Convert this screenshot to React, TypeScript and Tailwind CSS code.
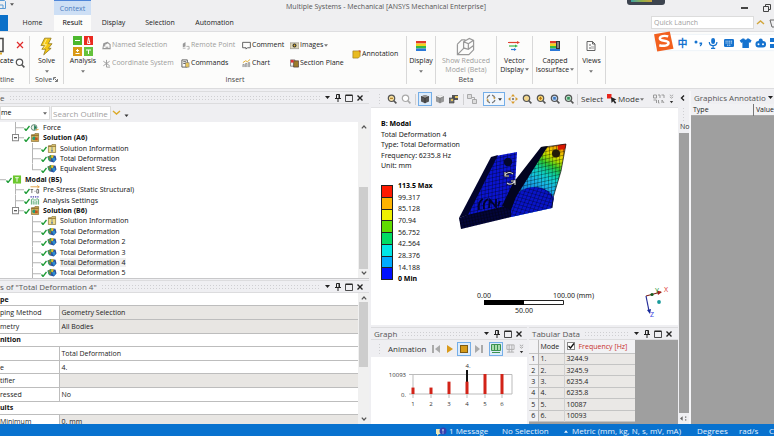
import type { ReactNode } from "react";
import clsx from "clsx";

const tabs = [
  { label: "Home", width: "w-[43px]" },
  { label: "Result", width: "w-[37px]", active: true },
  { label: "Display", width: "w-[45px]" },
  { label: "Selection", width: "w-[48px]" },
  { label: "Automation", width: "w-[61px]" },
];

type Kind = "force" | "solution" | "info" | "result" | "modal" | "stress" | "settings";

const outline: { label: string; level: 0 | 1 | 2; kind: Kind; selected?: boolean; last?: boolean }[] = [
  { label: "Force", level: 1, kind: "force" },
  { label: "Solution (A6)", level: 1, kind: "solution", last: true },
  { label: "Solution Information", level: 2, kind: "info" },
  { label: "Total Deformation", level: 2, kind: "result" },
  { label: "Equivalent Stress", level: 2, kind: "result", last: true },
  { label: "Modal (B5)", level: 0, kind: "modal" },
  { label: "Pre-Stress (Static Structural)", level: 1, kind: "stress" },
  { label: "Analysis Settings", level: 1, kind: "settings" },
  { label: "Solution (B6)", level: 1, kind: "solution", last: true },
  { label: "Solution Information", level: 2, kind: "info" },
  { label: "Total Deformation", level: 2, kind: "result" },
  { label: "Total Deformation 2", level: 2, kind: "result" },
  { label: "Total Deformation 3", level: 2, kind: "result" },
  { label: "Total Deformation 4", level: 2, kind: "result", selected: true },
  { label: "Total Deformation 5", level: 2, kind: "result" },
];

const details: { label: string; value?: string; group?: boolean; shaded?: boolean }[] = [
  { label: "pe", group: true },
  { label: "ping Method", value: "Geometry Selection", shaded: true },
  { label: "metry", value: "All Bodies", shaded: true },
  { label: "nition", group: true },
  { label: "", value: "Total Deformation" },
  { label: "e", value: "4." },
  { label: "tifier", value: "", shaded: true },
  { label: "ressed", value: "No" },
  { label: "ults", group: true },
  { label: "Minimum", value: "0. mm", shaded: true },
];

const legend = [
  { color: "bg-[#ff1a00]", label: "99.317" },
  { color: "bg-[#ffb400]", label: "85.128" },
  { color: "bg-[#eef000]", label: "70.94" },
  { color: "bg-[#5fdc00]", label: "56.752" },
  { color: "bg-[#00dc64]", label: "42.564" },
  { color: "bg-[#00e6e6]", label: "28.376" },
  { color: "bg-[#00aaff]", label: "14.188" },
  { color: "bg-[#0010ff]", label: "0 Min" },
];

const modes = [
  { mode: 1, freq: "3244.9", x: 42 },
  { mode: 2, freq: "3245.9", x: 60 },
  { mode: 3, freq: "6235.4", x: 78 },
  { mode: 4, freq: "6235.8", x: 96 },
  { mode: 5, freq: "10087", x: 114 },
  { mode: 6, freq: "10093", x: 131 },
];

function Caret({ className = "" }: { className?: string }) {
  return (
    <svg viewBox="0 0 5 3" className={clsx("h-[3px] w-[4px] shrink-0", className)} fill="currentColor">
      <path d="M0 0h5L2.500 3z" />
    </svg>
  );
}

function Magnifier({ color = "#fff", stroke = "#555", children }: { color?: string; stroke?: string; children?: ReactNode }) {
  return (
    <svg viewBox="0 0 10 10" className="size-[10px] shrink-0">
      <circle cx="4.500" cy="4.300" r="3.200" fill={color} stroke={stroke} strokeWidth="1.200" />
      <path d="M6.800 6.700 9.400 9.400" stroke={stroke} strokeWidth="1.600" />
      {children}
    </svg>
  );
}

function CubeIcon({ dark }: { dark?: boolean }) {
  return (
    <svg viewBox="0 0 10 10" className="size-[10px] shrink-0">
      <path d="M1 2.500 5 1l4 1.500v5L5 9.300 1 7.500z" fill={dark ? "#555" : "#999"} />
      <path d="M1 2.500 5 1l4 1.500L5 4.200z" fill={dark ? "#999" : "#f2f2f2"} />
      <path d="M5 4.200v5M1 2.500l4 1.700 4-1.700" fill="none" stroke={dark ? "#222" : "#666"} strokeWidth=".6" />
    </svg>
  );
}

function PanelButtons() {
  return (
    <div className="flex shrink-0 items-center gap-[3px] text-[#222]">
      <button aria-label="Panel menu" className="flex size-[7px] items-center justify-center">
        <Caret className="w-[5px]" />
      </button>
      <button aria-label="Pin" className="size-[8px]">
        <svg viewBox="0 0 8 8" className="size-[8px]" stroke="currentColor" fill="none">
          <path d="M2.500.5h3v4h-3zM1 4.500h6M4 4.500V8" />
          <path d="M5 .5v4" />
        </svg>
      </button>
      <button aria-label="Maximize" className="size-[8px]">
        <svg viewBox="0 0 8 8" className="size-[8px]" stroke="currentColor" fill="none">
          <path d="M.5 1.500h7v6h-7z" strokeWidth=".8" />
          <path d="M.5 1.200h7" strokeWidth="1.400" />
        </svg>
      </button>
      <button aria-label="Close panel" className="size-[8px]">
        <svg viewBox="0 0 8 8" className="size-[8px]" stroke="currentColor" strokeWidth="1.400">
          <path d="m1.500 1.500 5 5M6.500 1.500l-5 5" />
        </svg>
      </button>
    </div>
  );
}

function PanelHeader({ title, className = "" }: { title: string; className?: string }) {
  return (
    <div className={clsx("flex h-[13px] shrink-0 items-center gap-[4px] border-y border-[#dcdcde] bg-[#efeff2] text-[#555]", className)}>
      <h2 className="whitespace-nowrap text-[8px]">{title}</h2>
      <div className="h-[5px] flex-1 bg-[radial-gradient(#cfcfd2_1px,transparent_1px)] bg-[length:3px_3px]" />
      <PanelButtons />
    </div>
  );
}

function ScrollBar({ thumb }: { thumb: string }) {
  return (
    <div className="flex w-[11px] shrink-0 flex-col items-center bg-[#f0f0f0] py-[3px]">
      <svg viewBox="0 0 6 4" className="h-[4px] w-[6px] shrink-0" fill="none" stroke="#555" strokeWidth="1.200">
        <path d="M.8 3.400 3 1l2.200 2.400" />
      </svg>
      <div className="flex w-[9px] flex-1 flex-col py-[2px]">
        <div className={clsx("bg-[#cdcdcd]", thumb)} />
      </div>
      <svg viewBox="0 0 6 4" className="h-[4px] w-[6px] shrink-0" fill="none" stroke="#555" strokeWidth="1.200">
        <path d="M.8.6 3 3 5.200.6" />
      </svg>
    </div>
  );
}

/* ---------- Title bar ---------- */

function TitleBar() {
  return (
    <header className="relative flex h-[32px] shrink-0 flex-col justify-end border-b border-[#dedee0] bg-[#efeff1]">
      <div className="absolute inset-x-0 top-0 flex h-[15px] items-center justify-between text-[#555]">
        <div className="flex w-[98px] items-center gap-[4px] pb-[6px]">
          <svg viewBox="0 0 6 9" className="h-[9px] w-[6px]" fill="none" stroke="#5b9bd5">
            <path d="M0 .5h4.500l1 1v7H0M0 5h3v3.500" />
          </svg>
          <Caret />
        </div>
        <h1 className="whitespace-nowrap text-[7px]">Multiple Systems - Mechanical [ANSYS Mechanical Enterprise]</h1>
        <div className="flex w-[100px] justify-end gap-[15px] pr-[3px]">
          <button aria-label="Minimize" className="h-[5px] w-[7px] border-b-2 border-[#444]" />
          <button aria-label="Restore" className="size-[8px]">
            <svg viewBox="0 0 8 8" className="size-[8px]" fill="none" stroke="#444">
              <path d="M.5 2.500h5v5h-5zM2.500 2.500v-2h5v5h-2" />
            </svg>
          </button>
        </div>
      </div>
      <div className="absolute top-0 right-[109px] h-[5px] w-[38px] rounded-b-[3px] bg-[#3d444f] px-[4px]">
        <div className="h-[2px] w-[21px] bg-linear-to-r from-[#3aa0a0] via-[#8dae4a] to-[#c9a43c]" />
      </div>
      <nav className="flex items-end text-[#222]">
        <button aria-label="File" className="h-[16px] w-[8px] bg-[#0b70c9]" />
        <div className="w-[3px]" />
        {tabs.map((tab) => (
          <div key={tab.label} className={clsx("flex flex-col text-center", tab.width)}>
            {tab.active && (
              <span className="h-[15px] border-t border-[#4f86d8] bg-[#cddff5] pt-[1px] text-[7px] leading-[13px] text-[#4a7cc0]">Context</span>
            )}
            <button className={clsx("h-[16px] text-[7px]", tab.active && "bg-[#fcfcfb] text-black")}>{tab.label}</button>
          </div>
        ))}
        <div className="flex-1" />
        <input aria-label="Quick Launch" placeholder="Quick Launch" className="mb-[2px] h-[13px] w-[103px] border border-[#dcdcdc] bg-white px-[2px] text-[7px] placeholder:text-[#a0a0a0]" />
        <svg viewBox="0 0 20 12" className="mb-[2px] h-[12px] w-[20px]" fill="none">
          <path d="m3 7 3.500-3L10 7" stroke="#d2a63c" strokeWidth="1.400" />
          <path d="m16 3 2 7h2M16 3h4" stroke="#666" />
        </svg>
      </nav>
    </header>
  );
}

/* ---------- Ribbon ---------- */

function Group({ label, className, children }: { label?: ReactNode; className: string; children: ReactNode }) {
  return (
    <section className={clsx("my-[4px] flex shrink-0 flex-col border-r border-[#d8d8d8]", className)}>
      <div className="flex flex-1 justify-center">{children}</div>
      <div className="h-[9px] text-center text-[7px] leading-[9px] text-[#444]">{label}</div>
    </section>
  );
}

function BigButton({ icon, lines, caret, disabled }: { icon: ReactNode; lines: string[]; caret?: "below" | "inline"; disabled?: boolean }) {
  return (
    <button disabled={disabled} className={clsx("flex flex-col items-center text-[7px] leading-[9px] whitespace-nowrap", disabled ? "text-[#9c9c9c]" : "text-[#222]")}>
      <span className="flex h-[20px] items-center justify-center">{icon}</span>
      {lines.map((line, i) => (
        <span key={line} className="flex items-center gap-[1px]">
          {line}
          {caret === "inline" && i === lines.length - 1 && <Caret className="text-[#777]" />}
        </span>
      ))}
      {caret === "below" && <Caret className="mt-[5px] text-[#777]" />}
    </button>
  );
}

function SmallButton({ icon, label, disabled, caret }: { icon: ReactNode; label: string; disabled?: boolean; caret?: boolean }) {
  return (
    <button disabled={disabled} className={clsx("flex h-[18px] items-center gap-[1px] text-[7px] whitespace-nowrap", disabled ? "text-[#9c9c9c]" : "text-[#222]")}>
      <svg viewBox="0 0 10 10" className="size-[9px] shrink-0" fill="none">
        {icon}
      </svg>
      {label}
      {caret && <Caret className="text-[#777]" />}
    </button>
  );
}

function Ribbon() {
  return (
    <div className="relative flex h-[57px] shrink-0 border-b border-[#dcdcde] bg-[#fcfcfb]">
      <Group className="w-[30px]" label={<span className="block pr-[15px]">tline</span>}>
        <div className="flex w-full">
          <button className="flex w-[13px] flex-col items-start text-[7px] leading-[9px]">
            <svg viewBox="0 0 6 20" className="h-[20px] w-[6px]" fill="none">
              <path d="M0 2.500h3v13H0" stroke="#444" strokeWidth="1.500" />
              <path d="M0 17.500h2" stroke="#e2ad28" strokeWidth="2" />
            </svg>
            cate
          </button>
          <div className="flex w-[13px] flex-col items-center">
            <button aria-label="Delete" className="h-[18px]">
              <svg viewBox="0 0 8 8" className="size-[8px]" stroke="#e02a2a" strokeWidth="1.200">
                <path d="m1 1 6 6M7 1 1 7" />
              </svg>
            </button>
            <button aria-label="Find" className="h-[18px]">
              <Magnifier />
            </button>
          </div>
        </div>
      </Group>
      <Group
        className="w-[34px]"
        label={
          <span className="flex items-center justify-center gap-[1px]">
            Solve
            <svg viewBox="0 0 5 5" className="size-[5px]" fill="none" stroke="#777">
              <path d="M.5 3V.5H3M1.500 1.500l3 3M4.500 2v2.500H2" />
            </svg>
          </span>
        }
      >
        <BigButton
          lines={["Solve"]}
          caret="below"
          icon={
            <svg viewBox="0 0 14 20" className="h-[19px] w-[13px]">
              <path d="M5 1h7L9 7h4l-4 5h3l-8 7 2-6H2l3-4H1z" fill="#f3c613" stroke="#8b7318" strokeWidth=".8" />
              <path d="m7 2-3 6h3l-3 4" stroke="#fff09a" fill="none" />
            </svg>
          }
        />
      </Group>
      <Group className="w-[343px]" label="Insert">
        <div className="flex w-[38px] shrink-0 justify-center">
          <BigButton
            lines={["Analysis"]}
            caret="below"
            icon={
              <svg viewBox="0 0 20 20" className="size-[20px]">
                <path d="M0 0h9v9H0z" fill="#4db82e" />
                <path d="M11 0h9v9h-9z" fill="#ea2a20" />
                <path d="M0 11h9v9H0z" fill="#d99a17" />
                <path d="M11 11h9v9h-9z" fill="#64c23c" />
                <path d="M2 4.500h5M3 14.500h3M4.500 13v3M2.500 17.500h4M13 14h5M15.500 14v4M14.500 7.500 15.500 1.500l1.500 6z" stroke="#fff" fill="none" />
              </svg>
            }
          />
        </div>
        <div className="grid flex-1 grid-cols-[79px_61px_48px_62px_1fr] content-start">
          <SmallButton disabled label="Named Selection" icon={<path d="M1 8.500h8V4L6 1.500 2 3zM3 6V3.500l3-1M4 7h3" stroke="#999" strokeWidth="1.200" />} />
          <SmallButton disabled label="Remote Point" icon={<><path d="M2 7V3l3-2v5z" fill="#999" /><path d="M6 6h3v3H7M2 8h3" stroke="#aaa" /></>} />
          <SmallButton label="Comment" icon={<path d="M.7 1.500h8.600v6H6L4.500 9V7.500H.7z" stroke="#555" />} />
          <SmallButton caret label="Images" icon={<><path d="M0 2h10v6.500H0z" fill="#ddd5b6" stroke="#777" strokeWidth=".6" /><circle cx="5" cy="5" r="2.200" fill="#333" /><circle cx="5" cy="5" r="1" fill="#e7b823" /></>} />
          <div className="row-span-2 flex items-center">
            <SmallButton label="Annotation" icon={<><path d="M1 1h8v6L7 9H1z" fill="#e9bb20" stroke="#96771c" strokeWidth=".7" /><path d="M7 .5h2.500V3z" fill="#d43" /></>} />
          </div>
          <SmallButton disabled label="Coordinate System" icon={<path d="M5 1v8M1.500 2.500 8.500 7.500M8.500 2.500 1.500 7.500M5 9h4" stroke="#999" />} />
          <SmallButton label="Commands" icon={<><path d="M1 1h6v8H1zM2.500 3h3M2.500 5h3" stroke="#555" /><path d="M5 4h4v5H5z" fill="#e9c75c" stroke="#777" strokeWidth=".6" /></>} />
          <SmallButton label="Chart" icon={<><path d="M1 9V6h1.500v3M4 9V5h1.500v4M7 9V4h1.500v5" fill="#ddd" stroke="#777" strokeWidth=".7" /><path d="m1 4 3-2 2 1 3-2.500" stroke="#e3a81d" /></>} />
          <SmallButton label="Section Plane" icon={<><path d="M.5 1h5v7h-5z" fill="#eee" stroke="#555" strokeWidth=".7" /><path d="M4 2h5.500v7H4z" fill="#9c7b2a" stroke="#433" strokeWidth=".7" /><path d="M1 1h3v3H1z" fill="#d33" /></>} />
        </div>
      </Group>
      <Group className="w-[29px]">
        <BigButton
          lines={["Display"]}
          caret="below"
          icon={
            <svg viewBox="0 0 10 10" className="size-[10px]">
              <path d="M0 0h10v2.500H0z" fill="#e03a2a" />
              <path d="M0 2.500h10V5H0z" fill="#f3d21c" />
              <path d="M0 5h10v2.500H0z" fill="#34b944" />
              <path d="M0 7.500h10V10H0z" fill="#2a78d8" />
            </svg>
          }
        />
      </Group>
      <Group className="w-[61px]" label="Beta">
        <BigButton
          disabled
          lines={["Show Reduced", "Model (Beta)"]}
          icon={
            <svg viewBox="0 0 20 20" className="size-[19px]" fill="none" stroke="#999" strokeWidth="1.300">
              <path d="M1.500 7.500v11h12l5-5v-10L14 1.500 8 5v6.500l5 1.500 5.500-4M1.500 7.500 6 3h4M8 5l5 2v6M13 7l5.500-3.500M1.500 18.500 8 12" />
            </svg>
          }
        />
      </Group>
      <Group className="w-[36px]">
        <BigButton
          lines={["Vector", "Display"]}
          caret="inline"
          icon={
            <svg viewBox="0 0 12 10" className="h-[10px] w-[12px]" strokeWidth="1.200">
              <path d="M0 1.500h9" stroke="#e04030" />
              <path d="M9 0l3 1.500L9 3z" fill="#e04030" />
              <path d="M1 5h6" stroke="#3cb44b" />
              <path d="M7 3.500 10 5 7 6.500z" fill="#3cb44b" />
              <path d="M3 8.500h3" stroke="#2a78d8" />
              <path d="M6 7l2.500 1.500L6 10z" fill="#2a78d8" />
            </svg>
          }
        />
      </Group>
      <Group className="w-[45px]">
        <BigButton
          lines={["Capped", "Isosurface"]}
          caret="inline"
          icon={
            <svg viewBox="0 0 10 10" className="size-[10px]">
              <path d="M0 0h6v2.500H0z" fill="#e03a2a" />
              <path d="M0 2.500h6V5H0z" fill="#f3d21c" />
              <path d="M0 5h6v2.500H0z" fill="#34b944" />
              <path d="M0 7.500h10V10H0z" fill="#2a78d8" />
              <path d="M6 0h4v8H6z" fill="#333" />
              <path d="M7 2h2M7 4h2M7 6h2" stroke="#fff" strokeWidth=".8" />
            </svg>
          }
        />
      </Group>
      <Group className="w-[28px]">
        <BigButton
          lines={["Views"]}
          caret="below"
          icon={
            <svg viewBox="0 0 10 10" className="size-[10px]" fill="none" stroke="#555" strokeWidth=".9">
              <path d="M1 .5h5.500L9 3v6.500H1zM6.500.5V3H9M3 4h2M3 7h4" />
              <path d="M5 5h3v3H5z" fill="#ccc" stroke="none" />
            </svg>
          }
        />
      </Group>
      <ImeBar />
    </div>
  );
}

/* floating input method bar */
function ImeBar() {
  return (
    <div className="absolute top-[3px] right-0 flex h-[15px] w-[119px] items-center rounded-l-[3px] bg-white pl-[20px] text-[#1673cf] shadow-[0_0_2px_#cfe0f2]">
      <svg viewBox="0 0 20 20" className="absolute -top-[4px] -left-[2px] size-[21px]">
        <path d="m1 3 15-2.500L19.500 17 4 19.500z" fill="#f2601f" />
        <path d="M14.500 5.200C11 4 6.500 4.800 6.500 7.200c0 3 8 1.200 8.300 4.100.2 2.700-5 3.400-8.800 2.300" fill="none" stroke="#fff" strokeWidth="2.300" />
      </svg>
      <button className="w-[16px] text-center font-['Noto_Sans_CJK_SC',sans-serif] text-[10px] leading-[14px] font-bold">中</button>
      <svg viewBox="0 0 78 12" className="h-[12px] w-[78px] shrink-0" fill="currentColor">
        <circle cx="6" cy="5" r="1.500" />
        <path d="M9.500 5.500h2.600c.5 2-.6 3.500-2.200 4V8.300c.6-.2.900-.6.900-1H9.500z" />
        <rect x="21.200" y="1" width="3.800" height="6" rx="1.900" />
        <path d="M19.300 5c0 4.800 7.600 4.800 7.600 0M23.100 9v2.500M21 11.300h4.200" fill="none" stroke="currentColor" strokeWidth="1.200" />
        <rect x="34" y="2" width="10" height="8" rx="1.300" />
        <path d="M35.500 4.200h7M35.500 6h7M37 8.200h4" stroke="#fff" strokeWidth=".8" strokeDasharray="1.200 .6" />
        <path d="m52.500 1.500-2.800 2 1.500 2.500 1.200-.7V11h6.500V5.300l1.200.7 1.500-2.500-2.800-2h-1.700c-.6 1.600-2.300 1.600-2.900 0z" />
        <rect x="65.500" y="4" width="10.500" height="6.500" rx="3" />
        <circle cx="70.700" cy="3.500" r="2" />
        <circle cx="68.500" cy="7.200" r="1" fill="#fff" />
        <circle cx="73" cy="7.200" r="1" fill="#fff" />
      </svg>
      <svg viewBox="0 0 4 10" className="ml-[2px] h-[10px] w-[4px] shrink-0" fill="currentColor">
        <path d="M0 0h4v4H0zM0 6h4v4H0z" />
      </svg>
    </div>
  );
}

/* ---------- Outline ---------- */

function TreeIcon({ kind }: { kind: Kind }) {
  return (
    <svg viewBox="0 0 10 10" className="h-[9px] w-[10px] shrink-0">
      {kind === "force" && (
        <>
          <circle cx="4" cy="5" r="3.200" fill="#e8efe8" stroke="#3d6b54" strokeWidth=".8" />
          <path d="M4 2 7 5 4 8z" fill="#1f7a4f" />
          <path d="m6 8 3-1" stroke="#e4a02a" />
        </>
      )}
      {(kind === "solution" || kind === "info") && (
        <>
          <path d="M1 2h3l1-1.500h4V9.500H1z" fill={kind === "info" ? "#f0dc86" : "#d3ac56"} stroke="#7d6527" strokeWidth=".7" />
          <path d="M1 2.500h8" stroke="#7a5c20" />
        </>
      )}
      {kind === "solution" && (
        <>
          <circle cx="4" cy="6" r="2" fill="#269a74" />
          <path d="M5 5h3v3H5z" fill="#c0531f" />
        </>
      )}
      {kind === "info" && <path d="M5 4v1M5 6v2.500" stroke="#2c5ca8" strokeWidth="1.300" />}
      {kind === "result" && (
        <>
          <path d="M0 3 4 1l5 1 1 4-3 3.500L2 8z" fill="#2a4f9c" />
          <path d="M0 3 4 1l1 3-2 4-2-1z" fill="#2fa060" />
          <path d="m4 1 3 .5L6 5 4 4z" fill="#e0c22f" />
          <path d="m5 5 3-1 1 3-2 2z" fill="#2b8fd0" />
          <path d="m1 3 2 1v3" stroke="#c7602a" fill="none" />
        </>
      )}
      {kind === "modal" && (
        <>
          <path d="M.5.5h9v9h-9z" fill="#6cc72e" />
          <path d="M3 3h4M5 3v4.500" stroke="#fff" />
        </>
      )}
      {kind === "stress" && (
        <>
          <path d="M0 2h10M7.500.5 9.500 2 7.500 3.500" stroke="#e09a3c" fill="none" />
          <path d="M0 5h3M1.500 5v4M4.500 7h1M7 5h2v4H7z" stroke="#555" fill="none" strokeWidth=".9" />
        </>
      )}
      {kind === "settings" && (
        <>
          <path d="M0 1h10" stroke="#4a3fb0" strokeDasharray="1.500 1" strokeWidth="1.500" />
          <path d="M1 9.500V4l2-1 2 2 2-2 2 1v5.500M3 9.500V5M5 9.500V6M7 9.500V5" stroke="#3b9a5a" fill="none" strokeWidth=".9" />
        </>
      )}
    </svg>
  );
}

function TreeRow({ item }: { item: (typeof outline)[number] }) {
  const branch = item.kind === "solution";
  return (
    <li className="flex min-h-0 flex-1 items-center whitespace-nowrap">
      <svg
        viewBox={`0 0 ${[6, 24, 41][item.level]} 10`}
        preserveAspectRatio="none"
        className={clsx("h-full shrink-0", item.level === 0 && "w-[6px]", item.level === 1 && "w-[24px]", item.level === 2 && "w-[41px]")}
        fill="none"
        stroke="#b4b4b4"
      >
        {item.level === 0 && <path d="M0 5.500h6" />}
        {item.level === 1 && <path d={item.last ? "M15.500 0v5.500H24" : "M15.500 0v10M15.500 5.500H24"} />}
        {item.level === 2 && <path d={item.last ? "M32.500 0v5.500H41" : "M32.500 0v10M32.500 5.500H41"} />}
        {branch && (
          <>
            <path d="M12.500 2.500h6v6h-6z" fill="#fff" stroke="#888" />
            <path d="M14 5.500h3" stroke="#333" />
          </>
        )}
      </svg>
      <svg viewBox="0 0 6 8" className="h-[8px] w-[6px] shrink-0" fill="none" stroke="#1c9a35" strokeWidth="1.300">
        <path d="m.5 5.500 1.500 2L5.500 3" />
      </svg>
      <TreeIcon kind={item.kind} />
      <button
        className={clsx(
          "ml-[3px] text-[7px] leading-[9px]",
          item.kind === "solution" || item.kind === "modal" ? "font-bold text-[#111]" : "text-[#222]",
          item.selected && "bg-[#efefef]",
        )}
      >
        {item.label}
      </button>
    </li>
  );
}

function OutlinePanel() {
  return (
    <section className="flex h-[188px] shrink-0 flex-col border-b border-[#c8c8ca] bg-[#efeff2]">
      <PanelHeader title="e" className="pr-[5px]" />
      <div className="flex h-[18px] shrink-0 items-center gap-[1px] py-[2px]">
        <label className="relative flex h-full w-[50px] items-center">
          <select aria-label="Filter by" className="size-full appearance-none border border-[#dcdcdc] bg-white text-[7px]">
            <option>me</option>
          </select>
          <Caret className="absolute right-[3px] text-[#666]" />
        </label>
        <input aria-label="Search Outline" placeholder="Search Outline" className="h-full w-[60px] border border-[#dcdcdc] bg-white pl-[1px] text-[8px] placeholder:text-[#a0a0a0]" />
        <svg viewBox="0 0 20 10" className="h-[10px] w-[20px]" fill="none">
          <path d="m1 3 3.500 3L8 3" stroke="#dba928" strokeWidth="1.400" />
          <path d="M12.500 6.500h4l-2 2.500z" fill="#333" />
        </svg>
      </div>
      <div className="flex min-h-0 flex-1 bg-white">
        <ul className="flex flex-1 flex-col font-['Noto_Sans','Open_Sans',sans-serif]">
          {outline.map((item, i) => (
            <TreeRow key={i} item={item} />
          ))}
        </ul>
        <ScrollBar thumb="mt-auto h-[82px]" />
      </div>
    </section>
  );
}

function DetailsPanel() {
  return (
    <section className="flex min-h-0 flex-1 flex-col overflow-hidden bg-[#efeff2] pt-[1px]">
      <PanelHeader title={'s of "Total Deformation 4"'} className="pr-[5px]" />
      <div className="flex min-h-0 flex-1 overflow-hidden">
        <div className="flex-1 overflow-hidden bg-white">
          <table className="h-[136px] w-full border-collapse text-[7px] leading-[9px] text-[#222]">
            <tbody>
              {details.map((row, i) => (
                <tr key={i} className="border-b border-[#bdbdbd]">
                  <th scope="row" colSpan={row.group ? 2 : 1} className={clsx("p-0 text-left", row.group ? "font-bold text-[#111]" : "w-[59px] border-r border-[#bdbdbd] font-normal")}>
                    {row.label}
                  </th>
                  {!row.group && <td className={clsx("p-0 pl-[2px]", row.shaded && "bg-[#e8e6e3]")}>{row.value}</td>}
                </tr>
              ))}
            </tbody>
          </table>
        </div>
        <ScrollBar thumb="h-[65px]" />
      </div>
    </section>
  );
}

/* ---------- Graphics ---------- */

function GraphicsToolbar() {
  return (
    <div className="flex h-[17px] shrink-0 items-center overflow-hidden border-b border-[#e2e2e4] bg-[#efeff2] pl-[7px] text-[8px] text-[#333]">
      <div className="h-[12px] w-[4px] shrink-0 bg-[radial-gradient(#cfcfd2_1px,transparent_1px)] bg-[length:3px_3px]" />
      <button aria-label="Zoom fit" className="ml-[5px]"><Magnifier color="#f6dfa0"><path d="M3 4.300h3" stroke="#a06d10" /></Magnifier></button>
      <button aria-label="Zoom previous" className="ml-[4px]"><Magnifier stroke="#aaa" /></button>
      <div className="ml-[4px] h-[11px] w-px shrink-0 bg-[#d0d0d2]" />
      <button aria-label="Shaded with edges" className="ml-[2px] flex size-[14px] shrink-0 items-center justify-center border border-[#74aee8] bg-[#dcebfa]"><CubeIcon dark /></button>
      <button aria-label="Wireframe" className="ml-[3px]"><CubeIcon /></button>
      <button aria-label="Show mesh" className="ml-[4px]">
        <svg viewBox="0 0 10 10" className="size-[10px]">
          <path d="M3 1h6v5H3z" fill="#555" />
          <path d="M0 4h5v5H0z" fill="#777" stroke="#333" strokeWidth=".6" />
          <path d="M6 2h3v2H6zM2 5h2v2H2z" fill="#e4c35e" />
        </svg>
      </button>
      <div className="ml-[4px] h-[11px] w-px shrink-0 bg-[#d0d0d2]" />
      <button aria-label="Copy view" className="ml-[3px]">
        <svg viewBox="0 0 10 10" className="size-[10px]" fill="#ddd" stroke="#999" strokeWidth=".8">
          <path d="M.5.5h4v4h-4zM5.500 5.500h4v4h-4z" />
          <path d="M5 3.500h2.500v2" fill="none" />
        </svg>
      </button>
      <button aria-label="Rotate" className="ml-[6px] flex h-[14px] w-[22px] shrink-0 items-center justify-center gap-[2px] border border-[#74aee8] bg-[#f1f6fc]">
        <svg viewBox="0 0 10 10" className="size-[10px]" fill="none" stroke="#777" strokeWidth="1.200">
          <path d="M1 4.500A4 4 0 0 1 4 1.200M6 1.200a4 4 0 0 1 3 3M9 6a4 4 0 0 1-3 2.800M4 8.800A4 4 0 0 1 1.100 6" />
          <path d="M7.500 3.500 9 4.800M1 5.200 2.500 6.500" stroke="#d5a33a" />
        </svg>
        <Caret />
      </button>
      <button aria-label="Pan" className="ml-[3px]">
        <svg viewBox="0 0 10 10" className="size-[10px]" fill="#d99b28">
          <path d="m5 0 2 2.500H3zM5 10 3 7.500h4zM0 5l2.500-2v4zM10 5 7.500 7V3z" />
          <path d="M4 4h2v2H4z" fill="#888" />
        </svg>
      </button>
      <button aria-label="Zoom" className="ml-[4px]"><Magnifier color="#f1d58b" /></button>
      <button aria-label="Zoom in" className="ml-[4px]"><Magnifier color="#f7d777"><path d="M3 4.300h3M4.500 2.800v3" stroke="#b3720a" /></Magnifier></button>
      <button aria-label="Box zoom" className="ml-[4px]"><Magnifier color="#bcd3f0"><path d="M3.200 3h2.600v2.600H3.200z" fill="#3f78c0" /></Magnifier></button>
      <button aria-label="Fit view" className="ml-[4px]"><Magnifier color="#b9dfc6"><path d="M3.200 3h2.600v2.600H3.200z" fill="#31905a" /></Magnifier></button>
      <div className="ml-[3px] h-[11px] w-px shrink-0 bg-[#d0d0d2]" />
      <span className="ml-[3px]">Select</span>
      <button className="ml-[4px] flex items-center gap-[1px]">
        <svg viewBox="0 0 10 10" className="size-[10px]">
          <path d="M0 0h4.500v4.500H0z" fill="#e8261c" />
          <path d="m4 3 5.500 2.500-2.200.8 2 2.500-1.300 1-1.800-2.600L4.500 9z" fill="#222" />
        </svg>
        Mode
        <Caret className="text-[#777]" />
      </button>
      <button aria-label="Selection filters" className="ml-auto">
        <svg viewBox="0 0 12 10" className="h-[10px] w-[12px]" fill="none" stroke="#999">
          <path d="M.5 1h3v3h-3zM5 1h2v3M8.500 1H11v3M.5 6h3v3M5.500 6v3h1M9 6l2 3M9 9V6" />
        </svg>
      </button>
      <button aria-label="More tools" className="mr-[4px] ml-[4px]">
        <svg viewBox="0 0 6 10" className="h-[10px] w-[5px]" fill="none" stroke="#999">
          <path d="m1 0 2 1.500L5 0M1 2.500 3 4l2-1.500" />
          <path d="M1 7.500h4L3 10z" fill="#333" stroke="none" />
        </svg>
      </button>
    </div>
  );
}

/* two-fin part with mesh and deformation bands */
function Model() {
  return (
    <svg viewBox="0 0 112 90" className="mt-[33px] h-[90px] w-[112px] shrink-0">
      <defs>
        <pattern id="mesh" width="3.600" height="3.600" patternUnits="userSpaceOnUse" patternTransform="rotate(-12) skewX(-14)">
          <path d="M0 0h3.600M0 0v3.600" stroke="#000" strokeWidth=".9" strokeOpacity=".7" />
        </pattern>
        <pattern id="mesh-curved" width="3.800" height="3.600" patternUnits="userSpaceOnUse" patternTransform="rotate(16) skewX(-6)">
          <path d="M0 0h3.800M0 0v3.600" stroke="#000" strokeWidth=".9" strokeOpacity=".65" />
        </pattern>
        <pattern id="mesh-dark" width="3" height="3" patternUnits="userSpaceOnUse" patternTransform="rotate(-12)">
          <path d="M0 0h3M0 0v3" stroke="#000" strokeWidth="1.200" strokeOpacity=".6" />
        </pattern>
        <linearGradient id="bands" gradientUnits="userSpaceOnUse" x1="112" y1="4" x2="85" y2="58">
          <stop offset="0" stopColor="#e01400" />
          <stop offset=".07" stopColor="#e84000" />
          <stop offset=".12" stopColor="#f0a800" />
          <stop offset=".24" stopColor="#e8dc00" />
          <stop offset=".32" stopColor="#a8dc00" />
          <stop offset=".42" stopColor="#30c830" />
          <stop offset=".52" stopColor="#10cc90" />
          <stop offset=".62" stopColor="#10d0d0" />
          <stop offset=".76" stopColor="#18b4e8" />
          <stop offset="1" stopColor="#1080e0" />
        </linearGradient>
      </defs>
      <path d="m41 15 21-4-2 33-12 22-37 9z" fill="#0a14d0" />
      <path d="m41 15 21-4-2 33-12 22-37 9z" fill="url(#mesh)" />
      <path d="m36 16 7-2-30 60-9 3z" fill="#02042c" />
      <path d="m4 77 8-3 38-9 6 1v10L6 88z" fill="#03053a" />
      <path d="m4 77 8-3 38-9 6 1v10L6 88z" fill="url(#mesh-dark)" />
      <path d="m91 6 20-3-5 27-8 27-1 10-41 9V66l4-9z" fill="url(#bands)" />
      <path d="M60 54c6-5 12-8 19-8 10 0 16 4 20 11l-2 10-41 9V66z" fill="#0814c8" />
      <path d="m91 6 20-3-5 27-8 27-1 1C93 50 87 46 79 46c-7 0-13 3-19 8z" fill="url(#mesh)" />
      <path d="M60 54c6-5 12-8 19-8 10 0 16 4 20 11l-2 10-41 9V66z" fill="url(#mesh-curved)" />
      <path d="m86 6 7-1-32 51-5 13-9-4 11-23z" fill="#020420" />
      <path d="m103 4 8-1-1 5-7 1z" fill="#d81800" />
      <path d="m86 6.500 25-3.500-5 27-8 27-1 10" fill="none" stroke="#111" strokeWidth=".7" />
      <circle cx="53" cy="21" r="4.200" fill="#04072f" />
      <circle cx="101" cy="12.500" r="4" fill="#241c08" />
      <path d="M24 69c-1-6 0-9 4-11M29 68c-1-5 0-8 4-10M34 67l1-8 6 7v-8M43 65l2-5" fill="none" stroke="#02042c" strokeWidth="1.800" />
      <path d="M50 34a5 5 0 0 1 8-1M60 39a5 5 0 0 1-8 3M50 31v4h4M60 44v-4h-4" fill="none" stroke="#111" strokeWidth="2.400" />
      <path d="M50 34a5 5 0 0 1 8-1M60 39a5 5 0 0 1-8 3M50 31v4h4M60 44v-4h-4" fill="none" stroke="#d8d8e4" strokeWidth="1.100" />
    </svg>
  );
}

function Viewport() {
  return (
    <div className="flex h-[217px] shrink-0 overflow-hidden bg-white font-['Noto_Sans','Open_Sans',sans-serif] text-[7px] text-[#222]">
      <div className="w-[84px] shrink-0 pt-[11px] pl-[10px] whitespace-nowrap">
        <h3 className="leading-[10px] font-bold text-black">B: Modal</h3>
        <p className="leading-[11px]">Total Deformation 4</p>
        <p className="leading-[10px]">Type: Total Deformation</p>
        <p className="leading-[11px]">Frequency: 6235.8 Hz</p>
        <p className="leading-[10px]">Unit: mm</p>
        <div className="mt-[9px] flex h-[105px] gap-[5px]">
          <div className="mt-[5px] mb-[5px] flex w-[12px] flex-col border-x border-t border-[#222]">
            {legend.map((band) => (
              <div key={band.label} className={clsx("flex-1 border-b border-[#222]", band.color)} />
            ))}
          </div>
          <ul className="flex flex-col leading-[11px]">
            <li className="flex-1 font-bold text-black">113.5 Max</li>
            {legend.map((band) => (
              <li key={band.label} className={clsx("flex-1", band.label === "0 Min" && "font-bold text-black")}>{band.label}</li>
            ))}
          </ul>
        </div>
      </div>
      <div className="flex flex-1 flex-col justify-between">
        <Model />
        <svg viewBox="0 0 130 30" className="mb-[6px] ml-[16px] h-[30px] w-[130px]" fill="#222" fontSize="7">
          <text x="6" y="9">0.00</text>
          <text x="82" y="9">100.00 (mm)</text>
          <path d="M13.500 11.500h79v4h-79z" fill="#fff" stroke="#222" />
          <path d="M13 11h40v5H13z" fill="#000" />
          <text x="44" y="24">50.00</text>
        </svg>
      </div>
      <svg viewBox="0 -4 30 38" className="mr-[5px] mb-[4px] h-[38px] w-[30px] shrink-0 self-end" fill="none" fontSize="7">
        <path d="M3 9 18 5" stroke="#7a2018" strokeWidth="1.200" />
        <path d="m3 9 3 15" stroke="#28309a" strokeWidth="1.200" />
        <circle cx="9" cy="7.500" r="1.600" fill="#135c1c" />
        <path d="m14 3.500 5 1.500-4 3z" fill="#a02018" />
        <path d="m4 23 4-1-1 5z" fill="#182a9a" />
        <circle cx="16" cy="15" r="1.900" fill="#189a9a" />
        <text x="12" y="6" fill="#2a9a3a">Y</text>
        <text x="21" y="5" fill="#e04038">X</text>
        <text x="7" y="30" fill="#3a48e0">Z</text>
      </svg>
    </div>
  );
}

function GraphPanel() {
  return (
    <section className="flex w-[156px] shrink-0 flex-col bg-white">
      <PanelHeader title="Graph" className="pr-[4px] pl-[3px]" />
      <div className="flex h-[17px] shrink-0 items-center bg-[#efeff2] pl-[7px] text-[8px] text-[#333]">
        <div className="h-[12px] w-[4px] bg-[radial-gradient(#cfcfd2_1px,transparent_1px)] bg-[length:3px_3px]" />
        <span className="ml-[6px] w-[38px]">Animation</span>
        <button aria-label="First frame" className="ml-[5px]">
          <svg viewBox="0 0 10 10" className="size-[10px]" fill="#aaa"><path d="M1 1h2v8H1zM9 1v8L4 5z" /></svg>
        </button>
        <button aria-label="Play" className="ml-[4px]">
          <svg viewBox="0 0 10 10" className="size-[10px]"><path d="m2 1 6 4-6 4z" fill="#d99a1c" /></svg>
        </button>
        <button aria-label="Stop" className="ml-[2px] flex size-[14px] items-center justify-center border border-[#74aee8] bg-[#dcebfa]">
          <span className="size-[8px] border border-[#7c5a14] bg-[#d59a18]" />
        </button>
        <button aria-label="Last frame" className="ml-[3px]">
          <svg viewBox="0 0 10 10" className="size-[10px]" fill="#aaa"><path d="M7 1h2v8H7zM1 1v8l5-4z" /></svg>
        </button>
        <button aria-label="Show graph" className="ml-[5px] flex size-[14px] items-center justify-center border border-[#74aee8] bg-[#dcebfa]">
          <svg viewBox="0 0 10 10" className="size-[10px]"><path d="M.5.500h9v6h-9z" fill="#a9dcae" stroke="#3c9250" /><path d="M1 8.500h8M3.500 1v5M6.500 1v5" stroke="#3c9250" /></svg>
        </button>
        <button aria-label="Show table" className="ml-[3px]">
          <svg viewBox="0 0 10 10" className="size-[9px]" fill="none" stroke="#aaa"><path d="M1 1h8v5H1zM3.500 1v8M6.500 1v8M1 9h8" /></svg>
        </button>
        <button aria-label="More animation tools" className="ml-[4px]">
          <svg viewBox="0 0 6 10" className="h-[10px] w-[5px]" fill="none" stroke="#999">
            <path d="m1 0 2 1.500L5 0M1 2.500 3 4l2-1.500" />
            <path d="M1 7.500h4L3 10z" fill="#333" stroke="none" />
          </svg>
        </button>
      </div>
      <svg viewBox="0 -1 156 66" className="h-[66px] w-[156px]" fill="#333" fontSize="6">
        <path d="M38 16.500h103v19.500H38M42 16v24M60 36v4M78 36v4M96 36v4M114 36v4M131 36v4" fill="none" stroke="#bbb" />
        <text x="35" y="19" textAnchor="end">10093</text>
        <text x="35" y="39" textAnchor="end">0.</text>
        <text x="97" y="10" textAnchor="middle">4.</text>
        <path d="M96 12v24" stroke="#111" strokeWidth="2" />
        {modes.map((m) => {
          const height = (Number(m.freq) / 10093) * 20;
          return <rect key={m.mode} x={m.x - 1.5} y={36 - height} width="3" height={height} fill="#d22318" />;
        })}
        {modes.map((m) => (
          <text key={m.mode} x={m.x} y="48" textAnchor="middle">{m.mode}</text>
        ))}
      </svg>
    </section>
  );
}

function TabularPanel() {
  return (
    <section className="flex min-w-0 flex-1 flex-col bg-[#9f9f9f]">
      <PanelHeader title="Tabular Data" className="pr-[5px] pl-[3px]" />
      <table className="h-[82px] w-[106px] border-collapse bg-[#eae8e6] text-[7px] leading-[9px] text-[#222]">
        <thead>
          <tr className="h-[13px] border-b border-[#c4c4c4] bg-[#f2f2f4]">
            <th className="w-[9px] border-r border-[#b8b8b8] p-0" />
            <th className="w-[26px] border-r border-[#b8b8b8] p-0 pl-[2px] text-left font-normal">Mode</th>
            <th className="p-0 pl-[2px] font-normal">
              <label className="relative flex items-center gap-[4px] whitespace-nowrap text-[#c8302c]">
                <input type="checkbox" defaultChecked className="size-[8px] appearance-none border border-[#888] bg-white" />
                <svg viewBox="0 0 8 8" className="pointer-events-none absolute left-0 size-[8px]" fill="none" stroke="#111" strokeWidth="1.300">
                  <path d="m1.500 4 2 2L7 1.500" />
                </svg>
                Frequency [Hz]
              </label>
            </th>
          </tr>
        </thead>
        <tbody>
          {modes.map((m) => (
            <tr key={m.mode} className="border-b border-[#c4c4c4]">
              <th scope="row" className="border-r border-[#b8b8b8] bg-[#f2f2f4] p-0 font-normal">{m.mode}</th>
              <td className="border-r border-[#d0d0d0] p-0 pl-[2px]">{m.mode}.</td>
              <td className="p-0 pl-[2px]">{m.freq}</td>
            </tr>
          ))}
        </tbody>
      </table>
    </section>
  );
}

function SideStrip() {
  return (
    <aside className="flex w-[13px] shrink-0 flex-col border-r-2 border-[#f6f6f8] bg-[#efeff2]">
      <button aria-label="Collapse" className="flex h-[13px] items-center pl-[2px]">
        <svg viewBox="0 0 5 6" className="h-[6px] w-[5px]" fill="none" stroke="#222" strokeWidth="1.400"><path d="M4 .5 1.500 3 4 5.500" /></svg>
      </button>
      <div className="mt-[3px] ml-[4px] h-[14px] w-[4px] bg-[radial-gradient(#cfcfd2_1px,transparent_1px)] bg-[length:3px_3px]" />
      <span className="h-[12px] pl-[2px] text-[7px] leading-[12px] text-[#333]">No</span>
      <div className="ml-[1px] flex-1 bg-[#9f9f9f]" />
      <div className="flex h-[11px] items-center gap-[2px] pl-[2px] text-[#666]">
        <svg viewBox="0 0 9 5" className="h-[5px] w-[8px]" fill="currentColor"><path d="M3 0v5L0 2.500zM6 0h1v2H6zM6 3h1v2H6z" /></svg>
      </div>
    </aside>
  );
}

function AnnotationPanel() {
  return (
    <section className="flex w-[83px] shrink-0 flex-col overflow-hidden bg-[#9f9f9f]">
      <div className="flex h-[13px] shrink-0 items-center gap-[2px] bg-[#efeff2] pl-[3px] text-[8px] text-[#555]">
        <h2 className="w-[72px] whitespace-nowrap">Graphics Annotatio</h2>
        <Caret className="w-[5px] text-[#222]" />
      </div>
      <table className="h-[12px] w-full border-b border-[#aaa] bg-[#f2f2f4] text-left text-[7px] leading-[9px] text-[#222]">
        <thead>
          <tr>
            <th className="w-[64px] border-r border-[#777] p-0 pl-[2px] font-normal">Type</th>
            <th className="p-0 pl-[2px] font-normal">Value</th>
          </tr>
        </thead>
      </table>
    </section>
  );
}

function StatusBar() {
  return (
    <footer className="flex h-[12px] shrink-0 items-center justify-end overflow-hidden bg-[#0872cf] pt-[2px] text-[8px] leading-[10px] whitespace-nowrap text-[#e8f2fc]">
      <button className="flex w-[66px] items-center gap-[2px]">
        <svg viewBox="0 0 11 9" className="h-[9px] w-[11px]">
          <path d="M0 2h7v5H3L1 9V7H0z" fill="#f0e6b0" />
          <circle cx="7" cy="4" r="3.500" fill="#3540b0" />
          <path d="M7 2v2.500M7 5.500v1" stroke="#fff" />
        </svg>
        1 Message
      </button>
      <span className="w-[62px]">No Selection</span>
      <button className="flex w-[133px] items-center gap-[4px]">
        <Caret className="rotate-180" />
        Metric (mm, kg, N, s, mV, mA)
      </button>
      <span className="w-[42px]">Degrees</span>
      <span className="w-[30px]">rad/s</span>
      <span className="w-[5px]">C</span>
    </footer>
  );
}

export default function App() {
  return (
    <div className="flex h-screen min-h-[436px] flex-col overflow-hidden bg-[#efeff2] font-['Open_Sans','Noto_Sans',sans-serif]">
      <TitleBar />
      <Ribbon />
      <main className="flex min-h-0 flex-1 pt-[2px]">
        <div className="flex w-[369px] shrink-0 flex-col">
          <OutlinePanel />
          <DetailsPanel />
        </div>
        <div className="ml-[2px] flex min-w-0 flex-1 flex-col">
          <GraphicsToolbar />
          <Viewport />
          <div className="flex min-h-0 flex-1 gap-[2px] pt-[2px]">
            <GraphPanel />
            <TabularPanel />
          </div>
        </div>
        <SideStrip />
        <AnnotationPanel />
      </main>
      <StatusBar />
    </div>
  );
}
